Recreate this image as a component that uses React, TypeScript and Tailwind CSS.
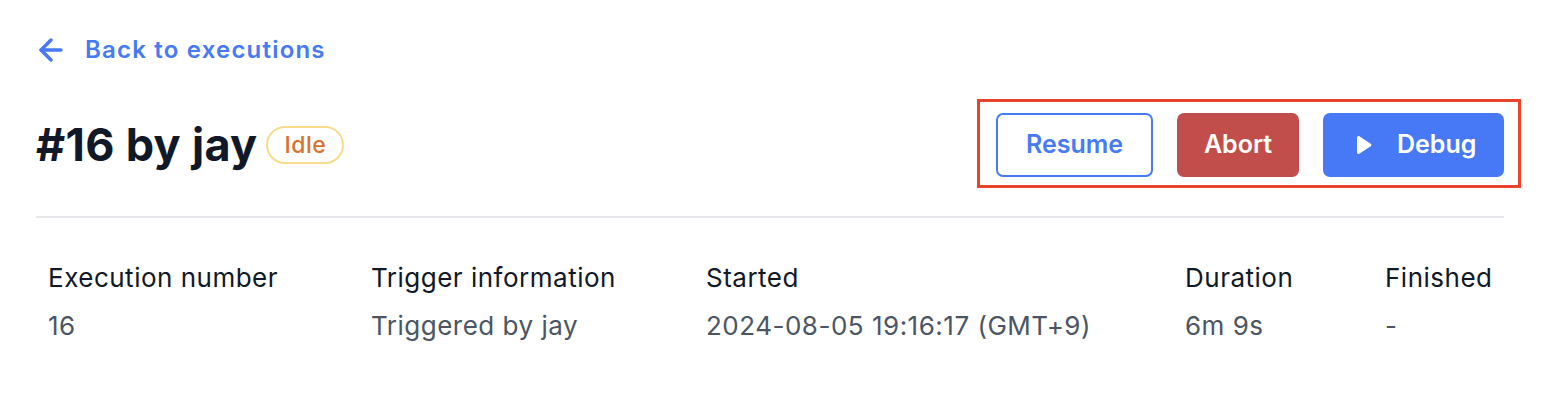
import { ArrowLeft } from "lucide-react";

const columns = [
  { label: "Execution number", value: "16" },
  { label: "Trigger information", value: "Triggered by jay" },
  { label: "Started", value: "2024-08-05 19:16:17 (GMT+9)" },
  { label: "Duration", value: "6m 9s" },
  { label: "Finished", value: "-" },
];

function PlayIcon() {
  return (
    <svg width="18" height="20" viewBox="0 0 18 20" fill="currentColor">
      <path d="M2 2.6c0-1.2 1.3-1.9 2.3-1.3l11.4 7.4c0.9 0.6 0.9 2 0 2.6L4.3 18.7C3.3 19.3 2 18.6 2 17.4z" />
    </svg>
  );
}

export default function App() {
  return (
    <div
      className="w-[1552px] h-[416px] bg-white pl-[36px] pr-[48px] pt-[34px]"
      style={{ fontFamily: "Inter, 'Noto Sans', sans-serif" }}
    >
      {/* Back link */}
      <a className="flex items-center gap-[17px] text-[#477af5] text-[24px] leading-[32px] font-semibold h-[32px] tracking-[1.2px]">
        <ArrowLeft size={34} strokeWidth={2.5} className="-ml-[2px]" />
        <span>Back to executions</span>
      </a>

      {/* Header */}
      <div className="mt-[47px] flex items-center justify-between h-[64px]">
        <div className="flex items-center gap-[9px]">
          <h1 className="text-[45px] leading-[56px] font-bold text-[#111827] tracking-[0.3px]">
            #16 by jay
          </h1>
          <span className="h-[38px] px-[16px] rounded-full border-2 border-[#f8dc8c] text-[#d9722d] text-[23px] leading-[34px] font-medium flex items-center tracking-[0.5px]">
            Idle
          </span>
        </div>

        <div className="relative flex items-center gap-[24px]">
          <div className="absolute -left-[19px] -right-[17px] -top-[14px] -bottom-[11px] border-[3px] border-[#e9432b] pointer-events-none" />
          <button className="h-[64px] w-[157px] rounded-[7px] border-2 border-[#477af5] text-[#477af5] text-[25px] font-semibold flex items-center justify-center">
            Resume
          </button>
          <button className="h-[64px] w-[122px] rounded-[7px] bg-[#c24e4b] text-white text-[25px] font-semibold flex items-center justify-center">
            Abort
          </button>
          <button className="h-[64px] w-[181px] rounded-[7px] bg-[#4779f6] text-white text-[25px] font-semibold flex items-center pl-[32px] gap-[24px]">
            <PlayIcon />
            <span>Debug</span>
          </button>
        </div>
      </div>

      {/* Divider */}
      <div className="mt-[39px] h-[2px] bg-[#e5e7eb]" />

      {/* Details */}
      <div className="mt-[44px] pl-[12px] grid grid-cols-[323px_335px_479px_200px_1fr]">
        {columns.map((c) => (
          <div key={c.label} className="flex flex-col gap-[16px] tracking-[0.5px]">
            <div className="text-[26px] leading-[32px] text-[#111827] whitespace-nowrap">{c.label}</div>
            <div className="text-[26px] leading-[32px] text-[#4b5563] whitespace-nowrap">{c.value}</div>
          </div>
        ))}
      </div>
    </div>
  );
}
